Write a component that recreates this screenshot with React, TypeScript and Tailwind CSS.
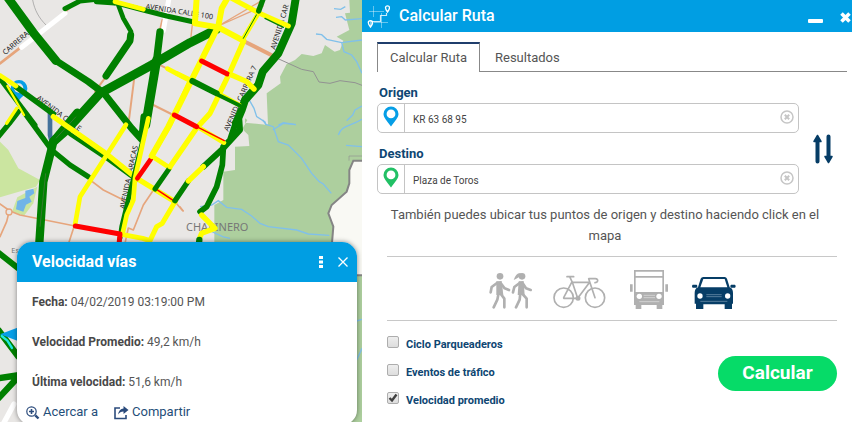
import type { ReactNode } from 'react';

const GREEN = '#008000';
const YELLOW = '#ffff00';
const RED = '#ff0000';
const TAN = '#e6a57c';
const WATER = '#80c0ea';

type RoadProps = { d: string; c: string; w: number };

function Road({ d, c, w }: RoadProps) {
  return (
    <path d={d} stroke={c} strokeWidth={w} fill="none" strokeLinecap="round" strokeLinejoin="round" />
  );
}

function StreetName({ x, y, angle, children }: { x: number; y: number; angle: number; children: ReactNode }) {
  return (
    <text x={x} y={y} transform={`rotate(${angle} ${x} ${y})`} fontSize="22" fill="#222222">
      {children}
    </text>
  );
}

function TrafficMap() {
  return (
    <svg
      className="absolute inset-0 h-full w-full font-['Noto_Sans',sans-serif]"
      viewBox="0 0 1086 1266"
      preserveAspectRatio="xMinYMin slice"
      aria-label="Mapa de tráfico"
    >
      <rect width="1086" height="1266" fill="#e9e7e5" />

      {/* parks and hills */}
      <path d="M0 425 L25 450 L55 505 L120 540 L108 560 L0 592Z" fill="#cbe5a0" />
      <path d="M52 592 L112 560 L100 610 L72 647 L36 636Z" fill="#cbe5a0" />
      <path d="M76 572 L100 566 L103 580 L88 590 L95 605 L78 614 L70 635 L48 628 L52 603 L76 594Z" fill="#70b4e8" />
      <path
        d="M1048 0 L1050 38 L1035 40 L1048 90 L1010 110 L1030 122 L1020 150 L1004 155 L975 135 L965 160 L940 168 L905 162 L885 180 L860 192 L840 230 L842 250 L800 280 L804 375 L735 368 L735 355 L742 360 L728 385 L732 392 L745 405 L748 438 L705 440 L705 510 L670 515 L670 600 L643 615 L643 740 L1086 740 L1086 1266 L1086 0Z"
        fill="#adcf9e"
      />
      <path d="M1086 800 V1266 H950 V800Z" fill="#adcf9e" />
      <path d="M1086 482 L1060 482 L1048 510 L1048 550 L1040 575 L995 615 L985 640 L1000 680 L995 826 L1086 826Z" fill="#f9f9f4" />
      <path d="M1086 482 L1060 482 L1048 510 L1048 550 L1040 575 L995 615 L985 640 L1000 680 L995 740 M1040 826 H1086" fill="none" stroke="#858585" strokeWidth="6" />
      <path d="M832 175 L905 208 L940 215 L957 246 L990 250 L1020 242 L1065 248 L1086 256" fill="none" stroke="#929292" strokeWidth="3" />
      <path d="M1047 482 V468 H1086 M98 0 C104 32 118 55 138 75" fill="none" stroke="#929292" strokeWidth="2" />
      <g fill="none" stroke={WATER} strokeWidth="4">
        <path d="M1002 26 L1022 28 L1036 20 M1008 52 L1025 50 L1036 60 L1086 56 M948 102 L965 104 L980 118 L1025 128 L1086 120 M1025 128 L1032 155 L1055 165 L1070 185 L1086 220" />
        <path d="M742 290 L762 325 L770 350 L795 366 L798 375 M835 375 L850 368 L888 374 M1086 318 L1065 330 L1058 345 L1040 362" />
        <path d="M788 360 L798 373 L820 380 L835 425 L865 435 L905 475 L935 520 L958 545 L970 552 L994 580 M818 390 L850 370 L888 374 M1015 405 C1025 375 1050 380 1086 358 M1038 436 L1086 440" />
        <path d="M600 620 L635 615 L655 602 L680 622 L725 628 L755 648 L780 670 L805 680 L890 690 L925 702 L988 706 M625 690 L668 710 L690 715 M1086 958 L1070 963 M1086 1045 L1070 1080" />
      </g>

      {/* secondary streets */}
      <Road d="M0 190 L65 140" c={TAN} w={8} />
      <Road d="M185 45 L230 5 M487 60 L480 90 M470 190 L500 205 M460 315 L520 345 M402 240 L385 375 M285 275 L318 230" c={TAN} w={6} />
      <Road d="M0 612 L30 633 L60 645 L225 678 M26 640 L20 665 L0 710 M222 680 L206 730 M268 538 L310 570 L375 602 M462 568 L430 615 L400 690 L385 684 L375 730 M525 605 L548 632" c={TAN} w={5} />
      <Road d="M780 5 L660 75 M790 18 L655 78 M578 65 L573 110 M540 620 L550 633" c={TAN} w={4} />
      <Road d="M735 125 L815 166" c={TAN} w={12} />
      <circle cx="27" cy="636" r="9" fill="#e9e7e5" stroke={TAN} strokeWidth="4" />
      <Road d="M65 142 L195 40 M506 0 L490 92" c="#ffffff" w={15} />
      <Road d="M0 1290 L42 1212" c="#ffffff" w={16} />
      <Road d="M150 335 L150 405 L156 430" c="#44719b" w={14} />

      <StreetName x={16} y={166} angle={-41}>CARRERA 6</StreetName>
      <StreetName x={436} y={26} angle={9}>AVENIDA CALLE 100</StreetName>
      <StreetName x={108} y={297} angle={37}>AVENIDA CALLE</StreetName>
      <StreetName x={374} y={628} angle={-78}>AVENIDA CARACAS</StreetName>
      <StreetName x={685} y={395} angle={-66}>AVENIDA CARRERA 7</StreetName>
      <StreetName x={826} y={150} angle={-73}>AVENIDA CAR</StreetName>
      <text x="558" y="693" fontSize="33" fill="#777777">CHAPINERO</text>
      <text x="34" y="760" fontSize="22" fill="#777777">Es</text>

      {/* location marker */}
      <path d="M56 302 C50 290 32 282 32 265 A25 25 0 0 1 82 265 C82 282 64 290 56 302Z" fill="#069ee6" />
      <circle cx="56" cy="264" r="14" fill="#e9e7e5" />

      {/* measured traffic */}
      <Road d="M14 -20 L100 98 L168 182" c={GREEN} w={26} />
      <Road d="M168 182 L265 245 L312 280 L395 385 L425 418 L432 350" c={GREEN} w={21} />
      <Road d="M195 26 L240 3 L290 -2 L345 8 L430 30 L500 48 L582 66" c={GREEN} w={15} />
      <Road d="M290 4 L345 8" c={GREEN} w={17} />
      <Road d="M355 15 L370 55 L393 95 L392 120" c={GREEN} w={14} />
      <Road d="M392 105 L390 122 L318 228" c={GREEN} w={21} />
      <Road d="M650 88 L570 128 L455 195 L300 280 L205 385 L160 425" c={GREEN} w={27} />
      <Road d="M480 96 L470 180" c={GREEN} w={22} />
      <Road d="M470 180 L437 375" c={GREEN} w={27} />
      <Road d="M232 338 L160 425 L130 545 L117 745" c={GREEN} w={25} />
      <path d="M228 350 L168 415 M137 520 L120 680" stroke="#4e7746" strokeWidth="2" fill="none" />
      <Road d="M75 340 L155 450 L210 495 L265 530" c={GREEN} w={16} />
      <Road d="M0 236 L105 375" c={GREEN} w={15} />
      <Road d="M50 262 L160 342" c={GREEN} w={17} />
      <Road d="M55 335 L28 370 L-5 410" c={GREEN} w={16} />
      <Road d="M22 258 L72 345" c={YELLOW} w={7} />
      <Road d="M50 325 L20 370" c={YELLOW} w={10} />
      <Road d="M0 226 L48 258" c={YELLOW} w={14} />
      <Road d="M210 402 L320 475 L410 540" c={GREEN} w={13} />
      <Road d="M160 350 L320 462 L410 535 L525 605" c={YELLOW} w={16} />
      <Road d="M345 5 L430 28" c={YELLOW} w={14} />
      <Road d="M378 374 L320 465 L240 590 L225 675" c={YELLOW} w={14} />
      <Road d="M440 350 L432 405 L365 680 L360 715" c={GREEN} w={14} />
      <Road d="M445 355 L405 535 L400 600 L380 645 L368 700" c={YELLOW} w={14} />
      <Road d="M525 605 L487 670 L470 680 L450 722 L428 715 L365 703" c={YELLOW} w={15} />
      <Road d="M226 678 L360 702 L356 745" c={RED} w={15} />
      <Road d="M502 206 L570 242 L510 375 L455 468 L510 504" c={YELLOW} w={14} />
      <Road d="M452 478 L412 535" c={RED} w={14} />
      <Road d="M465 565 L525 605" c={RED} w={5} />
      <Road d="M506 508 L465 567" c={GREEN} w={15} />
      <Road d="M525 602 L565 543" c={GREEN} w={16} />

      <Road d="M888 -10 L875 70 L835 160 L788 215 L775 255 L735 300 L725 330 L708 370" c={GREEN} w={24} />
      <Road d="M708 365 L690 420 L670 440 M718 360 L720 390 L670 445 L610 500" c={GREEN} w={18} />
      <Road d="M670 445 L667 495 L650 560 L620 620 L600 635" c={GREEN} w={17} />
      <Road d="M610 500 L565 543" c={YELLOW} w={16} />
      <Road d="M605 645 L645 685 L605 700 L600 712" c={YELLOW} w={16} />
      <Road d="M598 720 L596 740" c={GREEN} w={19} />
      <Road d="M590 -5 L585 65" c={YELLOW} w={18} />
      <Road d="M685 -10 L665 25 L655 78 L540 310 L505 380 L455 468" c={YELLOW} w={18} />
      <Road d="M585 70 L655 82 L730 122" c={YELLOW} w={18} />
      <Road d="M775 40 L730 115" c={YELLOW} w={14} />
      <Road d="M772 40 L730 115" c={GREEN} w={3} />
      <Road d="M730 125 L688 220 L630 340 L590 384 L510 500" c={YELLOW} w={16} />
      <Road d="M695 -5 L775 38 L865 78" c={YELLOW} w={15} />
      <Road d="M795 55 L850 82" c={GREEN} w={4} />
      <Road d="M790 -5 L776 33" c={GREEN} w={16} />
      <Road d="M605 183 L682 222" c={RED} w={15} />
      <Road d="M695 225 L740 245 L762 267" c={YELLOW} w={16} />
      <Road d="M530 220 L572 240" c={YELLOW} w={14} />
      <Road d="M650 278 L718 315" c={YELLOW} w={14} />
      <Road d="M577 243 L650 280" c={GREEN} w={18} />
      <Road d="M655 285 L722 318" c={GREEN} w={12} />
      <Road d="M595 382 L672 428" c={YELLOW} w={14} />
      <Road d="M523 345 L590 380" c={RED} w={15} />
      <Road d="M590 380 L673 422" c={RED} w={4} />

      {/* segments beside the information window */}
      <Road d="M-5 758 L55 805" c={GREEN} w={18} />
      <Road d="M-5 990 L55 1070" c={GREEN} w={19} />
      <Road d="M-5 1135 L60 1125 L-5 1195" c={GREEN} w={19} />
      <path d="M0 1003 L60 980 L60 1025Z" fill="#069ee6" />
      <Road d="M5 1008 L22 1022 L36 1044" c="#20e8e0" w={7} />
    </svg>
  );
}

function PinIcon({ color }: { color: string }) {
  return (
    <svg width="16" height="21" viewBox="0 0 16 21" aria-hidden="true">
      <path
        fillRule="evenodd"
        fill={color}
        d="M8 0.5A7.5 7.5 0 0 0 0.5 8C0.5 11.5 4 15 8 20.5C12 15 15.5 11.5 15.5 8A7.5 7.5 0 0 0 8 0.5ZM8 3.5A4.4 4.4 0 1 1 8 12.3A4.4 4.4 0 0 1 8 3.5Z"
      />
    </svg>
  );
}

function RouteIcon() {
  return (
    <svg width="24" height="24" viewBox="0 0 24 24" fill="none" stroke="#fff" aria-hidden="true">
      <path d="M3 7.500H18M8 18.500H22M7.500 2V13M15.500 9V24" strokeWidth="1" opacity=".4" />
      <path d="M5 22V17.500H14.500V11.500H20.500V9" strokeWidth="1.200" opacity=".8" />
      <path d="M21.500 8C20 6 19.500 5 19.500 3.800A2 2 0 0 1 23.500 3.800C23.500 5 23 6 21.500 8Z" strokeWidth="1.300" />
      <path d="M4.500 23C3 21 2.300 20 2.300 18.800A2.200 2.200 0 0 1 6.700 18.800C6.700 20 6 21 4.500 23Z" strokeWidth="1.300" />
    </svg>
  );
}

function InfoWindow() {
  const rows = [
    ['Fecha:', '04/02/2019 03:19:00 PM'],
    ['Velocidad Promedio:', '49,2 km/h'],
    ['Última velocidad:', '51,6 km/h'],
  ];
  return (
    <section className="absolute top-[242px] right-[5px] left-[17px] overflow-hidden rounded-[15px] bg-white shadow-[0_0_5px_rgba(0,0,0,0.45)]">
      <header className="flex h-10 items-center bg-[#009ee3] pr-[6px] pl-[15px] text-white">
        <h2 className="flex-1 text-base font-bold">Velocidad vías</h2>
        <button type="button" aria-label="Opciones" className="flex w-3 justify-center">
          <svg width="4" height="12" viewBox="0 0 4 12" fill="currentColor" aria-hidden="true">
            <path d="M0 0H4V3H0ZM0 4.500H4V7.500H0ZM0 9H4V12H0Z" />
          </svg>
        </button>
        <button type="button" aria-label="Cerrar" className="ml-2 flex size-4 items-center justify-center">
          <svg width="10" height="10" viewBox="0 0 10 10" stroke="currentColor" strokeWidth="1.300" aria-hidden="true">
            <path d="M.5 .5L9.500 9.500M9.500 .5L.5 9.500" />
          </svg>
        </button>
      </header>
      <dl className="px-[15px] text-xs leading-10 text-[#555]">
        {rows.map(([label, value]) => (
          <div key={label} className="flex gap-[3px]">
            <dt className="font-bold text-[#484848]">{label}</dt>
            <dd>{value}</dd>
          </div>
        ))}
      </dl>
      <nav className="flex gap-4 px-2 pb-[3px] text-[13px] leading-5 text-[#1f4e79]">
        <a href="#acercar" className="flex items-center gap-[3px]">
          <svg width="15" height="15" viewBox="0 0 15 15" fill="none" stroke="#2b4b7c" aria-hidden="true">
            <circle cx="6.500" cy="6.500" r="4.700" strokeWidth="1.200" />
            <path d="M4 6.500H9M6.500 4V9" strokeWidth="1.600" />
            <path d="M10.300 10.300L13.500 13.500" strokeWidth="2.400" />
          </svg>
          Acercar a
        </a>
        <a href="#compartir" className="flex items-center gap-[3px]">
          <svg width="15" height="15" viewBox="0 0 15 15" aria-hidden="true">
            <path d="M6 3H1V13.500H12V10" fill="none" stroke="#2b4b7c" strokeWidth="1.600" />
            <path d="M9.500 1L14.500 5L9.500 9V6.500C7 6.500 5.500 7.500 4 9.500C4.500 6 6.500 3.800 9.500 3.500Z" fill="#2b4b7c" />
          </svg>
          Compartir
        </a>
      </nav>
    </section>
  );
}

function PlaceField({ id, label, value, color }: { id: string; label: string; value: string; color: string }) {
  return (
    <div>
      <label htmlFor={id} className="block pl-[2px] text-[13px] leading-[21px] font-bold text-[#0e4672]">
        {label}
      </label>
      <div className="flex h-[30px] items-stretch rounded-[5px] border border-[#c4c4c4]">
        <span className="flex w-[27px] items-center justify-center border-r border-[#c4c4c4] pb-1">
          <PinIcon color={color} />
        </span>
        <input id={id} type="text" defaultValue={value} className="min-w-0 flex-1 px-2 pt-[2px] text-[10px] text-[#444] outline-none" />
        <button type="button" aria-label={`Borrar ${label}`} className="mr-1 flex items-center pb-[2px]">
          <svg width="14" height="14" viewBox="0 0 14 14" fill="none" stroke="#c6c6c6" aria-hidden="true">
            <circle cx="7" cy="7" r="6" strokeWidth="1.500" />
            <path d="M4.800 4.800L9.200 9.200M9.200 4.800L4.800 9.200" strokeWidth="2" />
          </svg>
        </button>
      </div>
    </div>
  );
}

function WalkIcon() {
  return (
    <svg width="44" height="36" viewBox="0 0 132 108" fill="none" stroke="currentColor" strokeLinecap="round" strokeLinejoin="round" aria-hidden="true">
      <g fill="currentColor" stroke="none">
        <circle cx="33" cy="10" r="10" />
        <circle cx="99" cy="10" r="10" />
        <path d="M95 0C82 1 80 8 74 21C84 17 88 11 95 11Z" />
        <path d="M22 25L38 24L43 66L22 66Z" />
        <path d="M89 25L104 24L107 66L86 66Z" />
      </g>
      <path d="M24 30L8 42L5 58M36 32L47 46L60 51M29 60L25 80L14 103M33 60L46 77L46 103" strokeWidth="8" />
      <path d="M92 30L76 42L72 58M102 32L111 46L125 51M94 60L92 80L81 103M98 60L113 77L113 103" strokeWidth="8" />
    </svg>
  );
}

function BikeIcon() {
  return (
    <svg width="53" height="34" viewBox="0 0 159 102" fill="none" stroke="currentColor" strokeWidth="5" strokeLinecap="round" strokeLinejoin="round" aria-hidden="true">
      <circle cx="32" cy="68" r="29" />
      <circle cx="126" cy="68" r="29" />
      <path d="M32 68L56 22M58 22L74 70H32M60 22H110L74 70M42 5H62M50 5L58 22M126 68L107 11H127C138 11 135 23 126 23" />
      <circle cx="75" cy="70" r="5" fill="currentColor" />
    </svg>
  );
}

function BusIcon() {
  return (
    <svg width="38" height="39" viewBox="0 0 114 117" aria-hidden="true">
      <path d="M12 0H102V105H97V117H80V105H34V117H17V105H12Z" fill="currentColor" />
      <path d="M17 5H97V18H17ZM17 23H97V66H17Z" fill="#fff" />
      <g fill="#fff">
        <circle cx="28" cy="79" r="8" />
        <circle cx="87" cy="79" r="8" />
      </g>
      <path d="M41 76H75M41 83H75M28 95H88" stroke="#e2e2e2" strokeWidth="2" />
      <path d="M0 43H8V65H0ZM106 43H114V65H106Z" fill="currentColor" />
    </svg>
  );
}

function CarIcon() {
  return (
    <svg width="44" height="32" viewBox="0 0 132 96" aria-hidden="true">
      <path
        fill="currentColor"
        d="M34 0H98Q103 0 105 5L113 31Q123 35 123 48V80H120V96H98V82H34V96H12V80H8V48Q8 35 18 31L26 5Q28 0 34 0Z"
      />
      <path d="M34 6H98L106 31H25Z" fill="#fff" />
      <g fill="#fff">
        <circle cx="24" cy="57" r="8" />
        <circle cx="107" cy="57" r="8" />
      </g>
      <path fill="currentColor" d="M2 23H14Q18 28 14 32H2Q-2 28 2 23ZM117 23H129Q133 28 129 32H117Q113 28 117 23Z" />
      <path d="M43 53H89M43 59H89M25 73H106" stroke="#7f9db5" strokeWidth="2" />
    </svg>
  );
}

function Option({ label, checked }: { label: string; checked?: boolean }) {
  return (
    <label className="flex h-7 items-center gap-[7px] text-[11px] font-bold text-[#0e4672]">
      <span className="relative mb-[6px] flex size-3">
        <input
          type="checkbox"
          defaultChecked={checked}
          className="peer size-3 appearance-none rounded-[2px] border border-[#adadad] bg-linear-to-b from-[#eeeeee] to-[#dddddd]"
        />
        <svg className="pointer-events-none absolute inset-0 hidden size-3 peer-checked:block" viewBox="0 0 12 12" fill="none" stroke="#404040" strokeWidth="2.400" aria-hidden="true">
          <path d="M2.500 6L5 8.500L9.500 2.500" />
        </svg>
      </span>
      {label}
    </label>
  );
}

function RoutePanel() {
  return (
    <main className="w-[490px] shrink-0 bg-white">
      <header className="flex h-8 items-center bg-[#009ee3] pl-1 text-white">
        <RouteIcon />
        <h1 className="ml-[9px] flex-1 text-base font-medium">Calcular Ruta</h1>
        <button type="button" aria-label="Minimizar" className="flex h-full items-center pt-[10px]">
          <span className="h-1 w-[15px] rounded-[1px] bg-white" />
        </button>
        <button type="button" aria-label="Cerrar panel" className="ml-[17px] flex h-full items-center pt-[3px] pr-[1px]">
          <svg width="11" height="11" viewBox="0 0 11 11" stroke="#fff" strokeWidth="3.600" aria-hidden="true">
            <path d="M1.500 1.500L9.500 9.500M9.500 1.500L1.500 9.500" />
          </svg>
        </button>
      </header>

      <div className="px-[15px] pt-[10px]">
        <div role="tablist" className="-mr-[10px] flex h-[30px] text-[13px] text-[#555]">
          <button type="button" role="tab" aria-selected="true" className="w-[103px] border-x border-t-2 border-x-[#888] border-t-[#1f3e6c]">
            Calcular Ruta
          </button>
          <div className="flex flex-1 border-b border-[#888] pl-[15px]">
            <button type="button" role="tab" aria-selected="false" className="pt-[2px]">
              Resultados
            </button>
          </div>
        </div>

        <div className="mt-[10px] flex items-center">
          <div className="flex-1 space-y-[10px]">
            <PlaceField id="origen" label="Origen" value="KR 63 68 95" color="#069ee6" />
            <PlaceField id="destino" label="Destino" value="Plaza de Toros" color="#22c065" />
          </div>
          <button type="button" aria-label="Intercambiar origen y destino" className="mt-[22px] ml-[14px] mr-[4px]">
            <svg width="20" height="30" viewBox="0 0 20 30" stroke="#063d66" fill="#063d66" strokeLinejoin="round" aria-hidden="true">
              <path d="M4.500 6V27.500M15.500 2.500V24" strokeWidth="4" strokeLinecap="round" />
              <path d="M4.500 1.500L8 7.500H1ZM15.500 28.500L12 22.500H19Z" strokeWidth="1.500" />
            </svg>
          </button>
        </div>

        <div className="pl-[10px]">
          <p className="py-[10px] pr-[14px] text-center text-[13px] leading-[21px] text-[#555]">
            También puedes ubicar tus puntos de origen y destino haciendo click en el mapa
          </p>

          <div className="flex h-[65px] items-end justify-center gap-5 border-y border-[#c8c8c8] pb-[11px] text-[#b0b0b0]">
            <button type="button" aria-label="A pie"><WalkIcon /></button>
            <button type="button" aria-label="Bicicleta"><BikeIcon /></button>
            <button type="button" aria-label="Bus" className="mx-1"><BusIcon /></button>
            <button type="button" aria-label="Automóvil" className="text-[#063d66]"><CarIcon /></button>
          </div>

          <div className="flex items-center justify-between pt-[10px]">
            <div>
              <Option label="Ciclo Parqueaderos" />
              <Option label="Eventos de tráfico" />
              <Option label="Velocidad promedio" checked />
            </div>
            <button type="button" className="h-[35px] w-[119px] rounded-full bg-[#06db68] text-[19px] font-bold text-white">
              Calcular
            </button>
          </div>
        </div>
      </div>
    </main>
  );
}

export default function App() {
  return (
    <div className="flex h-screen overflow-hidden font-[Roboto,sans-serif]">
      <aside className="relative min-w-0 flex-1 overflow-hidden">
        <TrafficMap />
        <InfoWindow />
      </aside>
      <RoutePanel />
    </div>
  );
}
